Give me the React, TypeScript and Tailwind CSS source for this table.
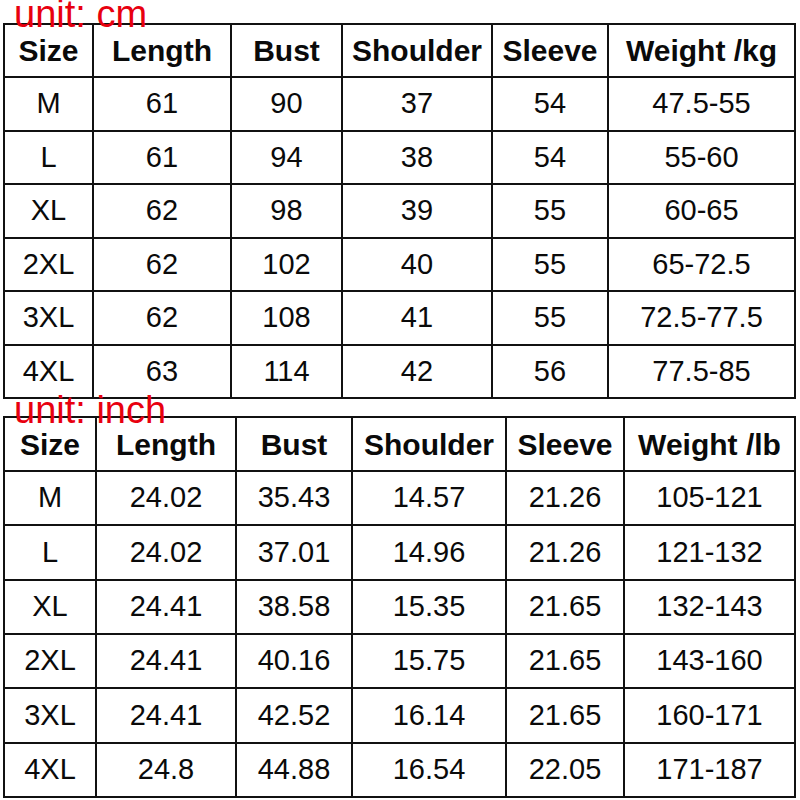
type Table = {
  label: string;
  labelBox: string;
  cols: number[];
  rowHeights: number[];
  head: string[];
  rows: string[][];
};

const cmTable: Table = {
  label: 'unit: cm',
  labelBox: 'h-[23px] leading-[28px]',
  cols: [89, 138, 111, 150, 116, 187],
  rowHeights: [53, 54, 53, 54, 53, 54, 53],
  head: ['Size', 'Length', 'Bust', 'Shoulder', 'Sleeve', 'Weight /kg'],
  rows: [
    ['M', '61', '90', '37', '54', '47.5-55'],
    ['L', '61', '94', '38', '54', '55-60'],
    ['XL', '62', '98', '39', '55', '60-65'],
    ['2XL', '62', '102', '40', '55', '65-72.5'],
    ['3XL', '62', '108', '41', '55', '72.5-77.5'],
    ['4XL', '63', '114', '42', '56', '77.5-85'],
  ],
};

const inchTable: Table = {
  label: 'unit: inch',
  labelBox: 'h-[17px] leading-[22px]',
  cols: [92, 140, 116, 154, 118, 171],
  rowHeights: [54, 54, 55, 54, 54, 55, 54],
  head: ['Size', 'Length', 'Bust', 'Shoulder', 'Sleeve', 'Weight /lb'],
  rows: [
    ['M', '24.02', '35.43', '14.57', '21.26', '105-121'],
    ['L', '24.02', '37.01', '14.96', '21.26', '121-132'],
    ['XL', '24.41', '38.58', '15.35', '21.65', '132-143'],
    ['2XL', '24.41', '40.16', '15.75', '21.65', '143-160'],
    ['3XL', '24.41', '42.52', '16.14', '21.65', '160-171'],
    ['4XL', '24.8', '44.88', '16.54', '22.05', '171-187'],
  ],
};

function SizeTable({ t }: { t: Table }) {
  const all = [t.head, ...t.rows];
  return (
    <>
      {/* red unit label sits on top of the table border */}
      <div className={`${t.labelBox} pl-[14px] text-[38px] text-[#e8000f] whitespace-nowrap`}>{t.label}</div>
      <div
        className="ml-[3px] grid w-fit border-l-2 border-t-2 border-[#111]"
        style={{ gridTemplateColumns: t.cols.map((c) => `${c}px`).join(' ') }}
      >
        {all.map((row, ri) =>
          row.map((cell, ci) => (
            <div
              key={`${ri}-${ci}`}
              className={`flex items-center justify-center border-b-2 border-r-2 border-[#111] text-[#0a0a0a] whitespace-nowrap ${
                ri === 0 ? 'text-[30px] font-bold' : 'text-[29px]'
              }`}
              style={{ height: t.rowHeights[ri] }}
            >
              {cell}
            </div>
          )),
        )}
      </div>
    </>
  );
}

export default function App() {
  return (
    <div className="w-[800px] h-[800px] overflow-hidden bg-white font-['Liberation_Sans',Arial,sans-serif]">
      <SizeTable t={cmTable} />
      <SizeTable t={inchTable} />
    </div>
  );
}
